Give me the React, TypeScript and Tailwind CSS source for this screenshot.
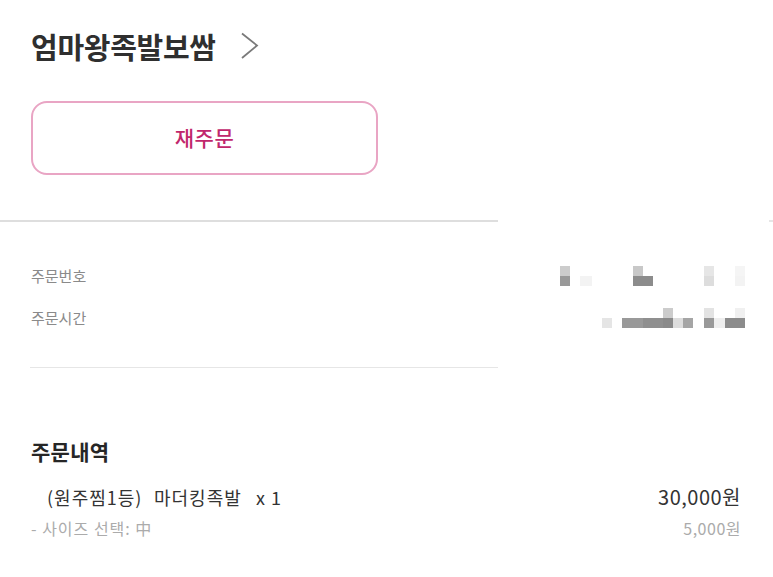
import React from 'react'

type Seg = [number, string | null]

// mosaic-blurred values (redacted in the original screenshot)
const orderNoBlur: Seg[][] = [
  [[10, '#cccccc'], [63, null], [10, '#c8c8c8'], [61, null], [10, '#e6e6e6'], [21, null], [10, '#f5f5f5']],
  [[10, '#999999'], [10, null], [12, '#f3f3f3'], [41, null], [20, '#8c8c8c'], [51, null], [10, '#dddddd'], [21, null], [10, '#f3f3f3']],
]

const orderTimeBlur: Seg[][] = [
  [[103, null], [10, '#cccccc'], [31, null], [10, '#e3e3e3'], [21, null], [10, '#f0f0f0']],
  [[42, null], [10, '#e5e5e5'], [10, null], [21, '#999999'], [20, '#8f8f8f'], [10, '#8a8a8a'], [10, '#dddddd'], [10, '#a5a5a5'], [11, null], [10, '#999999'], [11, '#eeeeee'], [20, '#8c8c8c']],
]

function Blur({ lines }: { lines: Seg[][] }) {
  return (
    <div className="flex flex-col w-[185px]">
      {lines.map((line, i) => (
        <div key={i} className="flex h-[10px]">
          {line.map(([w, c], j) => (
            <div key={j} className="h-full" style={{ width: w, background: c ?? 'transparent' }} />
          ))}
        </div>
      ))}
    </div>
  )
}

function InfoRow({ label, lines }: { label: string; lines: Seg[][] }) {
  return (
    <div className="flex items-center justify-between h-[30px] pl-[31px] pr-[28px]">
      <span className="text-[15px] text-[#8a8a8a]">{label}</span>
      <Blur lines={lines} />
    </div>
  )
}

export default function App() {
  return (
    <div
      className="w-full min-h-[577px] bg-white overflow-hidden"
      style={{ fontFamily: '"Noto Sans CJK KR", "Noto Sans", sans-serif' }}
    >
      {/* Store name */}
      <div className="flex items-center h-[36px] mt-[28px] pl-[31px]">
        <h1 className="text-[29px] leading-[36px] font-bold text-[#2f2f2f] tracking-[-0.3px]">엄마왕족발보쌈</h1>
        <svg width="20" height="28" viewBox="0 0 20 28" className="ml-[24px]">
          <polyline points="2,1.5 17,13.5 2,26" fill="none" stroke="#7a7a7a" strokeWidth="1.8" />
        </svg>
      </div>

      {/* Reorder */}
      <div className="pl-[31px] mt-[37px]">
        <button className="w-[347px] h-[74px] rounded-[16px] border-2 border-[#e9a5c4] flex items-center justify-center bg-white">
          <span className="text-[21px] font-medium text-[#c1276c] tracking-[0.5px]">재주문</span>
        </button>
      </div>

      <div className="flex mt-[45px]">
        <div className="w-[498px] h-[2px] bg-[#dedede]" />
        <div className="flex-1" />
        <div className="w-[4px] h-[2px] bg-[#e6e6e6]" />
      </div>

      {/* Order info */}
      <div className="flex flex-col gap-[12px] mt-[39px]">
        <InfoRow label="주문번호" lines={orderNoBlur} />
        <InfoRow label="주문시간" lines={orderTimeBlur} />
      </div>

      <div className="ml-[30px] w-[468px] h-px bg-[#e6e6e6] mt-[34px]" />

      {/* Order details */}
      <h2 className="pl-[31px] mt-[68px] h-[30px] leading-[30px] text-[21px] font-bold text-[#262626] tracking-[0.3px]">주문내역</h2>

      <div className="flex items-center justify-between h-[26px] mt-[18px] pl-[47px] pr-[32px]">
        <div className="flex items-center text-[18px] text-[#333333] tracking-[1px]">
          <span className="w-[107px]">(원주찜1등)</span>
          <span className="w-[102px]">마더킹족발</span>
          <span>x 1</span>
        </div>
        <span className="text-[20px] text-[#333333] tracking-[0.5px]">30,000원</span>
      </div>
      <div className="flex items-center justify-between h-[22px] mt-[7px] pl-[31px] pr-[32px]">
        <span className="text-[16px] text-[#ababab] tracking-[1px]">- 사이즈 선택: 中</span>
        <span className="text-[16px] text-[#ababab] tracking-[0.5px]">5,000원</span>
      </div>
    </div>
  )
}
